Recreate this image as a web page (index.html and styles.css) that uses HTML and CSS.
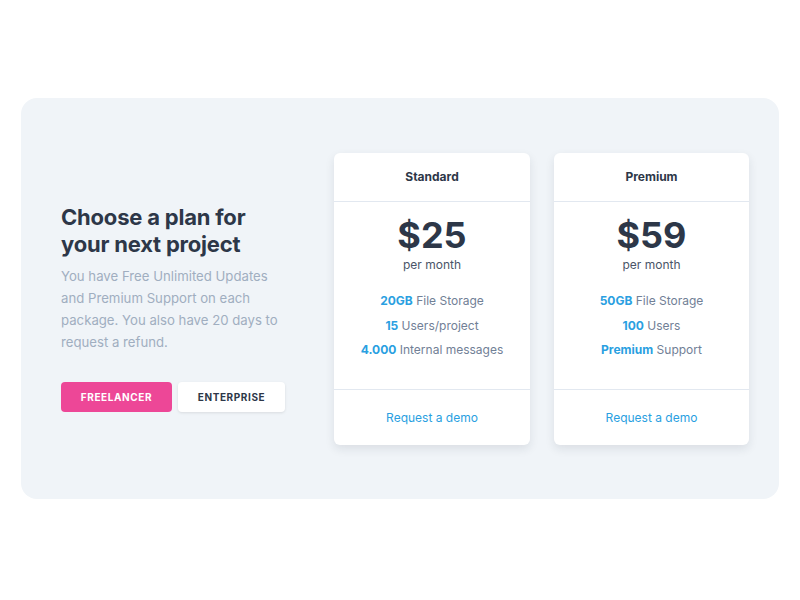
FILE: index.html
```html
<!DOCTYPE html>
<html lang="en">
<head>
<meta charset="utf-8">
<title>Pricing</title>
<link rel="stylesheet" href="styles.css">
</head>
<body>
<section class="panel">
  <div class="intro">
    <h1 class="title">Choose a plan for<br>your next project</h1>
    <p class="lead">You have Free Unlimited Updates and Premium Support on each package. You also have 20 days to request a refund.</p>
    <div class="toggle">
      <button class="btn btn-active">FREELANCER</button>
      <button class="btn btn-plain">ENTERPRISE</button>
    </div>
  </div>
  <div class="cards">
    <div class="card">
      <div class="card-head">Standard</div>
      <div class="card-body">
        <div class="price">$25</div>
        <div class="period">per month</div>
        <ul class="features">
          <li><strong>20GB</strong> File Storage</li>
          <li><strong>15</strong> Users/project</li>
          <li><strong>4.000</strong> Internal messages</li>
        </ul>
      </div>
      <div class="card-foot"><a class="demo" href="#">Request a demo</a></div>
    </div>
    <div class="card">
      <div class="card-head">Premium</div>
      <div class="card-body">
        <div class="price">$59</div>
        <div class="period">per month</div>
        <ul class="features">
          <li><strong>50GB</strong> File Storage</li>
          <li><strong>100</strong> Users</li>
          <li><strong>Premium</strong> Support</li>
        </ul>
      </div>
      <div class="card-foot"><a class="demo" href="#">Request a demo</a></div>
    </div>
  </div>
</section>
</body>
</html>
```

FILE: styles.css
```css
* { box-sizing: border-box; }
html, body { margin: 0; padding: 0; background: #fff; }
body {
  font-family: Inter, "Noto Sans", "Liberation Sans", sans-serif;
  color: #2d3748;
  padding: 98px 21px 0 21px;
}
.panel {
  width: 758px;
  height: 401px;
  background: #f0f4f8;
  border-radius: 16px;
  display: flex;
  align-items: flex-start;
  justify-content: space-between;
  padding: 55px 30px 0 40px;
}
.intro {
  width: 246px;
  margin-top: 51px;
}
.title {
  margin: 0;
  font-size: 22px;
  line-height: 27px;
  font-weight: 700;
  color: #2d3748;
  letter-spacing: -0.2px;
}
.lead {
  width: 224px;
  margin: 7px 0 0 0;
  font-size: 13.2px;
  line-height: 22px;
  color: #a0aec0;
}
.toggle {
  display: flex;
  gap: 6px;
  margin-top: 29px;
}
.btn {
  font-family: inherit;
  font-size: 10px;
  font-weight: 700;
  letter-spacing: 0.6px;
  height: 30px;
  border: 0;
  border-radius: 4px;
  padding: 0;
  cursor: pointer;
}
.btn-active {
  width: 111px;
  background: #ed4797;
  color: #fff;
}
.btn-plain {
  width: 107px;
  background: #fff;
  color: #2d3748;
  box-shadow: 0 1px 3px rgba(0,0,0,0.1);
}
.cards {
  display: flex;
  gap: 24px;
}
.card {
  width: 196px;
  background: #fff;
  border-radius: 6px;
  box-shadow: 0 4px 10px rgba(30,40,60,0.10);
  text-align: center;
}
.card:last-child { width: 195px; }
.card-head {
  height: 49px;
  border-bottom: 1px solid #e2e8f0;
  font-size: 12px;
  font-weight: 700;
  line-height: 48px;
  color: #2d3748;
}
.card-body {
  padding: 11px 0 26px;
  border-bottom: 1px solid #e2e8f0;
}
.price {
  font-size: 36px;
  font-weight: 700;
  line-height: 44px;
  color: #2d3748;
}
.period {
  font-size: 12px;
  line-height: 15px;
  color: #4a5568;
}
.features {
  list-style: none;
  margin: 17px 0 0;
  padding: 0;
  font-size: 12px;
  line-height: 24.5px;
  color: #718096;
}
.features strong {
  color: #2a9fe1;
  font-weight: 700;
}
.card-foot {
  height: 55px;
  display: flex;
  align-items: center;
  justify-content: center;
}
.demo {
  font-size: 12px;
  color: #2a9fe1;
  text-decoration: none;
}
```
